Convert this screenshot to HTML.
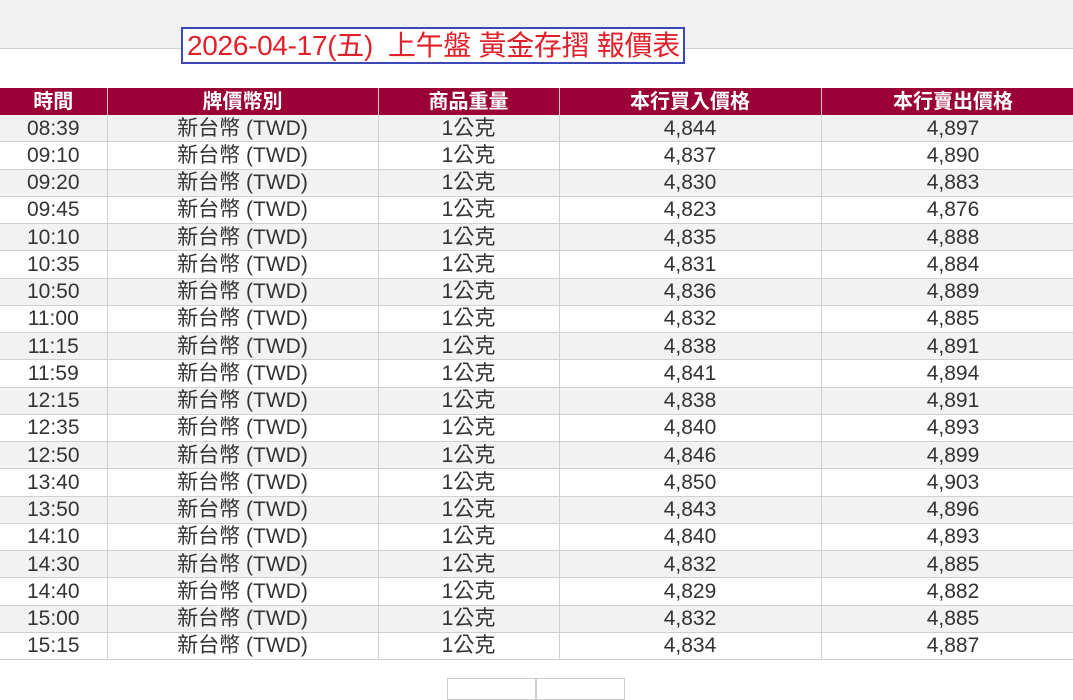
<!DOCTYPE html>
<html><head><meta charset="utf-8"><style>
body{margin:0;width:1073px;height:682px;overflow:hidden;background:#fff;font-family:"Liberation Sans","Noto Sans CJK TC",sans-serif;}
.top{position:absolute;left:0;top:0;width:1073px;height:48px;background:#f1f1f1;border-bottom:1px solid #d0d0d0;}
.title{position:absolute;left:181px;top:27px;width:496px;height:33px;border:2px solid #3c48b8;background:#fff;color:#e0202a;font-size:28px;line-height:33px;padding-left:4px;white-space:nowrap;letter-spacing:-0.3px;}
table{position:absolute;left:0;top:88px;border-collapse:collapse;width:1085px;table-layout:fixed;}
th{background:#9b0036;color:#fff;font-size:20px;font-weight:bold;height:27px;padding:0;border-right:1px solid #d8c0c8;line-height:26px;}
td{height:26.25px;padding:0;font-size:21px;color:#333;text-align:center;border-right:1px solid #d0d0d0;border-bottom:1px solid #d0d0d0;line-height:25px;}
tr:nth-child(odd) td{background:#f2f2f2;}
.b{position:absolute;top:678px;height:20px;border:1px solid #ccc;}
</style></head><body>
<div class="top"></div>
<div class="title">2026-04-17(五)&nbsp; 上午盤 黃金存摺 報價表</div>
<table>
<colgroup><col style="width:107px"><col style="width:271px"><col style="width:181px"><col style="width:262px"><col style="width:264px"></colgroup>
<thead><tr><th>時間</th><th>牌價幣別</th><th>商品重量</th><th>本行買入價格</th><th>本行賣出價格</th></tr></thead>
<tbody>
<tr><td>08:39</td><td>新台幣 (TWD)</td><td>1公克</td><td>4,844</td><td>4,897</td></tr>
<tr><td>09:10</td><td>新台幣 (TWD)</td><td>1公克</td><td>4,837</td><td>4,890</td></tr>
<tr><td>09:20</td><td>新台幣 (TWD)</td><td>1公克</td><td>4,830</td><td>4,883</td></tr>
<tr><td>09:45</td><td>新台幣 (TWD)</td><td>1公克</td><td>4,823</td><td>4,876</td></tr>
<tr><td>10:10</td><td>新台幣 (TWD)</td><td>1公克</td><td>4,835</td><td>4,888</td></tr>
<tr><td>10:35</td><td>新台幣 (TWD)</td><td>1公克</td><td>4,831</td><td>4,884</td></tr>
<tr><td>10:50</td><td>新台幣 (TWD)</td><td>1公克</td><td>4,836</td><td>4,889</td></tr>
<tr><td>11:00</td><td>新台幣 (TWD)</td><td>1公克</td><td>4,832</td><td>4,885</td></tr>
<tr><td>11:15</td><td>新台幣 (TWD)</td><td>1公克</td><td>4,838</td><td>4,891</td></tr>
<tr><td>11:59</td><td>新台幣 (TWD)</td><td>1公克</td><td>4,841</td><td>4,894</td></tr>
<tr><td>12:15</td><td>新台幣 (TWD)</td><td>1公克</td><td>4,838</td><td>4,891</td></tr>
<tr><td>12:35</td><td>新台幣 (TWD)</td><td>1公克</td><td>4,840</td><td>4,893</td></tr>
<tr><td>12:50</td><td>新台幣 (TWD)</td><td>1公克</td><td>4,846</td><td>4,899</td></tr>
<tr><td>13:40</td><td>新台幣 (TWD)</td><td>1公克</td><td>4,850</td><td>4,903</td></tr>
<tr><td>13:50</td><td>新台幣 (TWD)</td><td>1公克</td><td>4,843</td><td>4,896</td></tr>
<tr><td>14:10</td><td>新台幣 (TWD)</td><td>1公克</td><td>4,840</td><td>4,893</td></tr>
<tr><td>14:30</td><td>新台幣 (TWD)</td><td>1公克</td><td>4,832</td><td>4,885</td></tr>
<tr><td>14:40</td><td>新台幣 (TWD)</td><td>1公克</td><td>4,829</td><td>4,882</td></tr>
<tr><td>15:00</td><td>新台幣 (TWD)</td><td>1公克</td><td>4,832</td><td>4,885</td></tr>
<tr><td>15:15</td><td>新台幣 (TWD)</td><td>1公克</td><td>4,834</td><td>4,887</td></tr>
</tbody></table>
<div class="b" style="left:447px;width:88px"></div>
<div class="b" style="left:535px;width:88px"></div>
</body></html>
